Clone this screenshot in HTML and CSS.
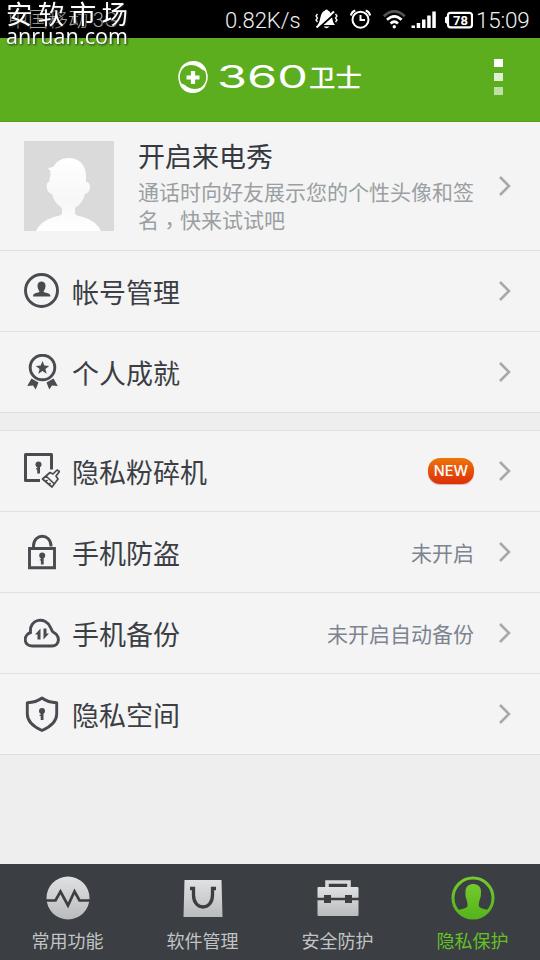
FILE: index.html
```html
<!DOCTYPE html>
<html lang="zh-CN">
<head>
<meta charset="utf-8">
<title>360卫士</title>
<link rel="stylesheet" href="styles.css">
</head>
<body>
<svg class="defs" width="0" height="0" aria-hidden="true">
  <defs>
    <linearGradient id="silver" x1="0" y1="0" x2="0" y2="1"><stop offset="0" stop-color="#e0e1e2"/><stop offset="1" stop-color="#b9bbbd"/></linearGradient>
    <linearGradient id="lime" x1="0" y1="0" x2="0" y2="1"><stop offset="0" stop-color="#74cb2d"/><stop offset="1" stop-color="#55b31c"/></linearGradient>
    <linearGradient id="face" x1="0" y1="0" x2="0" y2="1"><stop offset="0" stop-color="#fff"/><stop offset=".6" stop-color="#f7f7f7"/><stop offset="1" stop-color="#fff"/></linearGradient>
    <symbol id="chevron" viewBox="0 0 14 22"><path d="M2 2l9 9-9 9" fill="none" stroke="#a8a8a8" stroke-width="2.6"/></symbol>
    <symbol id="keyhole" viewBox="0 0 8 14"><circle cx="4" cy="3.6" r="3"/><path d="M2.700 5h2.800v7.500H2.700zM1.600 7.200h1.500v1.200H1.600z"/></symbol>
  </defs>
</svg>
<div class="app">
  <div class="status">
    <span class="carrier">中国移动 3G</span>
    <span class="speed">0.82K/s</span>
    <svg class="status-icons" width="162" height="24" viewBox="310 8 162 24">
      <path d="M316.500 25c3.500-3 2-13 7.500-14.500a1.600 1.600 0 0 1 3 0c5 2 3.500 11.500 7 14.500zM322.500 26.500h6q-3 3.500-6 0z" fill="#fff"/>
      <path d="M316 29.500L334.500 13" stroke="#000" stroke-width="2"/>
      <path d="M315.500 27.500L333 11.500" stroke="#fff" stroke-width="2"/>
      <path d="M316.500 14l-1.500 2 1.500 2-1.500 2 1.500 2M334.500 14l1.500 2-1.500 2 1.500 2-1.500 2" fill="none" stroke="#fff" stroke-width="1.300"/>
      <g fill="none" stroke="#fff" stroke-width="2"><circle cx="359.500" cy="19.700" r="8"/><path d="M359.500 15v5h4.500M349.800 15.500q1-4 4.500-5M369.200 15.500q-1-4-4.500-5"/></g>
      <g fill="none" stroke="#fff" stroke-width="2.700"><path d="M382.800 16.200q10.500-9.500 21 0" stroke="#555"/><path d="M386 19.800q7.300-7 14.600 0M389.600 23.500q3.700-3.600 7.400 0"/></g><circle cx="393.300" cy="26.700" r="1.700" fill="#fff"/>
      <path d="M410.500 25.500h3.500v2.500h-3.500zM415.700 23h3.500v5h-3.500zM421 19.500h3.500V28H421zM426.200 15.500h3.500V28h-3.500zM431.300 11.500h3.500V28h-3.500z" fill="#fff"/>
      <rect x="447" y="12.800" width="24" height="14.500" rx="2.500" fill="none" stroke="#fff" stroke-width="2.200"/><path d="M444 17.500l3-2v9l-3-2z" fill="#fff"/>
      <text x="452" y="24.500" class="battery">78</text>
    </svg>
    <span class="clock">15:09</span>
    <svg class="watermark" width="130" height="48" viewBox="0 0 130 48">
      <text class="wm-name" x="6" y="23.500" textLength="122">安软市场</text>
      <text class="wm-site" x="6" y="43.500" textLength="122">anruan.com</text>
    </svg>
  </div>
  <header class="header">
    <svg class="brand" width="190" height="38" viewBox="175 59 190 38">
      <circle cx="193" cy="77" r="14" fill="none" stroke="#fff" stroke-width="1.500"/>
      <path d="M180 69a15 15 0 0 1 21-6c3 2 5 5 5.500 8q-5-1-8-4-8-5-18.500 2zM206 85a15 15 0 0 1-21 6c-3-2-5-5-5.500-8q5 1 8 4 8 5 18.500-2z" fill="#fff"/>
      <path d="M193 71v13M186.500 77.500h13" stroke="#fff" stroke-width="4.200"/>
      <text x="217" y="88" class="brand-num" textLength="91" lengthAdjust="spacingAndGlyphs">360</text>
      <text x="309" y="87" class="brand-cn" textLength="53" lengthAdjust="spacingAndGlyphs">卫士</text>
    </svg>
    <div class="more"><i></i><i></i><i></i></div>
  </header>
  <main class="content">
    <section class="profile">
      <svg class="avatar" width="90" height="90" viewBox="0 0 90 90">
        <rect width="90" height="90" fill="#dadada"/>
        <path d="M12 90c4-9 13-13 22-15q4-1 4-3v-5q-8-5-10-14c-6-1-7-12-3-12 1-5 1-6 2-8l-2-1 2-1-3-4 5-1c4-6 9-9 16-9 11 0 17 8 17 18v6c6 0 5 11-1 12q-2 9-10 14v5q0 2 4 3c9 2 18 6 22 15z" fill="url(#face)"/>
      </svg>
      <div class="profile-text">
        <h2>开启来电秀</h2>
        <p>通话时向好友展示您的个性头像和签名<span class="comma" lang="zh-TW">，</span>快来试试吧</p>
      </div>
      <svg class="arrow"><use href="#chevron"/></svg>
    </section>
    <section class="group">
      <div class="row">
        <svg class="icon" viewBox="0 0 36 36"><circle cx="17.500" cy="17.500" r="16" fill="none" stroke="#484b50" stroke-width="2.900"/><path d="M13.500 12.500c0-5.500 8-5.500 8 0 0 3-1 4.500-2 6 .5 2 7 .5 7 5H9c0-4.500 6-3 6.500-5-1-1.500-2-3-2-6z" fill="#484b50"/></svg>
        <span class="label">帐号管理</span><svg class="arrow"><use href="#chevron"/></svg>
      </div>
      <div class="row">
        <svg class="icon" viewBox="0 0 36 36"><circle cx="18.500" cy="13.500" r="12.300" fill="none" stroke="#484b50" stroke-width="2.900"/><path d="M18.500 7l1.800 4.600 4.900.3-3.800 3.100 1.300 4.800-4.200-2.700-4.200 2.700 1.300-4.800-3.800-3.100 4.900-.3zM7.500 24.500l7 4-2.800 7-2.700-4-5.800.5zM29.500 24.500l-7 4 2.800 7 2.700-4 5.800.5z" fill="#484b50"/></svg>
        <span class="label">个人成就</span><svg class="arrow"><use href="#chevron"/></svg>
      </div>
    </section>
    <section class="group second">
      <div class="row">
        <svg class="icon" viewBox="0 0 36 36"><path d="M27.500 16.500V1.500h-26v26H16" fill="none" stroke="#484b50" stroke-width="3" stroke-linejoin="round"/><use href="#keyhole" x="10.500" y="8" width="8" height="14" fill="#484b50"/><path d="M18.500 26l7.500-6.500 3 1.500 4-4 2.500 1.500-3.500 4.500 2 3-6 8z M22 23l8.500 8M21.500 29l2-2M24.500 32l2-2" fill="none" stroke="#484b50" stroke-width="1.700" stroke-linejoin="round"/></svg>
        <span class="label">隐私粉碎机</span><span class="badge">NEW</span><svg class="arrow"><use href="#chevron"/></svg>
      </div>
      <div class="row">
        <svg class="icon" viewBox="0 0 36 36"><path d="M5.500 14.500h25v19.200h-25zM9.500 14v-2c0-13 17.500-13 17.500 0v.5" fill="none" stroke="#484b50" stroke-width="2.900"/><use href="#keyhole" x="14.200" y="18" width="8" height="14" fill="#484b50"/></svg>
        <span class="label">手机防盗</span><span class="value">未开启</span><svg class="arrow"><use href="#chevron"/></svg>
      </div>
      <div class="row">
        <svg class="icon" viewBox="0 0 36 36"><path d="M8 31C-.5 31-1 20 6.500 17.500 5 3.500 22 1 26.500 12.500c1 1 .7 3 2.500 4.500 8 4 6.500 14-1 14z" fill="none" stroke="#484b50" stroke-width="2.900"/><path d="M13.500 24.500h3v-11L11 19.500h2.500zM22.500 13.500h-3v11l5.500-6h-2.500z" fill="#484b50"/></svg>
        <span class="label">手机备份</span><span class="value">未开启自动备份</span><svg class="arrow"><use href="#chevron"/></svg>
      </div>
      <div class="row">
        <svg class="icon" viewBox="0 0 36 36"><path d="M18 2q-6 4.500-14.700 4.700V18q0 10 14.700 16.500Q32.700 28 32.700 18V6.700Q24 6.500 18 2z" fill="none" stroke="#484b50" stroke-width="2.900" stroke-linejoin="round"/><use href="#keyhole" x="14" y="11.500" width="8" height="14" fill="#484b50"/></svg>
        <span class="label">隐私空间</span><svg class="arrow"><use href="#chevron"/></svg>
      </div>
    </section>
  </main>
  <nav class="tabs">
    <div class="tab"><svg viewBox="0 0 44 44"><circle cx="22" cy="22" r="21.500" fill="url(#silver)"/><path d="M0 24.500h9.500l5-9 7.500 14 6.500-14 5 9H44" fill="none" stroke="#3b3e42" stroke-width="2.700"/></svg><span>常用功能</span></div>
    <div class="tab"><svg viewBox="0 0 44 44"><path d="M3.500 4h37l1 37h-39z" fill="url(#silver)"/><path d="M9 12.500h3.500V19c0 16 19 16 19 0v-6.500H35" fill="none" stroke="#3b3e42" stroke-width="3.300"/></svg><span>软件管理</span></div>
    <div class="tab"><svg viewBox="0 0 44 44"><path d="M11 11V6h22v5" fill="none" stroke="#d8d9da" stroke-width="3.600"/><rect x="1.500" y="11" width="41" height="29" rx="1" fill="url(#silver)"/><path d="M1 23h42" stroke="#3b3e42" stroke-width="2.400"/><path d="M8 19h7v8H8zM29 19h7v8h-7z" fill="#3b3e42"/></svg><span>安全防护</span></div>
    <div class="tab active"><svg viewBox="0 0 44 44"><circle cx="22" cy="22" r="20" fill="none" stroke="url(#lime)" stroke-width="3"/><path d="M14.500 15C14.500 5.500 30 5.500 30 15c0 3 0 5-.7 7-1 3-1.500 4-1.500 8 2 4 8 2 10 5.500Q32 42 22 42.500 12 42 6.500 35.500c2-3.500 8-1.500 10-5.500 0-4-.5-5-1.500-8-.7-2-.5-4-.5-7z" fill="url(#lime)"/></svg><span>隐私保护</span></div>
  </nav>
</div>
</body>
</html>
```
FILE: styles.css
```css
* { box-sizing: border-box; margin: 0; padding: 0; }
body { font-family: Roboto, "Noto Sans CJK SC", sans-serif; background: #eeeeee; }
.defs { display: block; height: 0; }
.app { width: 540px; height: 960px; display: flex; flex-direction: column; background: #eeeeee; overflow: hidden; }

.status { position: relative; height: 38px; flex: none; background: #000; color: #f2f2f2; display: flex; align-items: center; padding: 2px 9px 0 8px; }
.carrier { font-size: 20px; line-height: 24px; color: #a5a5a5; font-weight: 300; white-space: nowrap; }
.speed { margin-left: auto; font-size: 22px; font-weight: 300; width: 78px; white-space: nowrap; }
.status-icons { margin: 0 3px 0 8px; }
.battery { font: bold 13px Roboto, sans-serif; fill: #fff; }
.clock { font-size: 22.500px; font-weight: 300; width: 55px; white-space: nowrap; letter-spacing: -.2px; }
.watermark { position: absolute; left: 0; top: 0; z-index: 2; filter: drop-shadow(1px 1px 1px #222); }
.wm-name { font-family: "Noto Sans CJK SC", sans-serif; font-size: 26.500px; fill: #fff; }
.wm-site { font-family: "Open Sans", sans-serif; font-size: 21.500px; fill: #fff; }

.header { position: relative; height: 84px; flex: none; background: #5dae1f; border-bottom: 1px solid #509f17; display: flex; align-items: center; justify-content: center; padding-bottom: 3px; }
.brand-num { font-family: Inter, sans-serif; font-size: 31px; font-weight: 400; fill: #fff; }
.brand-cn { font-family: "Noto Sans CJK SC", sans-serif; font-size: 25px; font-weight: 500; fill: #fff; }
.more { position: absolute; right: 37px; top: 21px; display: flex; flex-direction: column; gap: 6px; }
.more i { width: 9px; height: 8px; background: #fff; }
.more i:nth-child(2) { opacity: .8; }
.more i:nth-child(3) { opacity: .6; }

.content { flex: 1; }
.profile { height: 129px; background: #f4f4f4; border-bottom: 1px solid #dfdfdf; display: flex; align-items: center; padding: 0 28px 0 24px; }
.avatar { flex: none; }
.profile-text { margin-left: 24px; width: 340px; flex: none; padding-top: 2px; }
h2 { font-size: 27px; line-height: 37px; font-weight: 400; color: #36393f; }
p { font-size: 21px; line-height: 28px; color: #9a9fa3; padding-top: 2px; }
.comma { font-family: "Noto Sans CJK TC", sans-serif; line-height: 1; vertical-align: -5px; }
.arrow { width: 14px; height: 22px; margin-left: auto; flex: none; }

.group { background: #f4f4f4; }
.second { margin-top: 17px; border-top: 1px solid #e0e0e0; }
.row { height: 81px; border-bottom: 1px solid #e0e0e0; display: flex; align-items: center; padding: 0 28px 0 24px; }
.icon { width: 36px; height: 36px; flex: none; }
.label { margin-left: 12px; font-size: 27px; line-height: 40px; color: #3b3e44; padding-top: 5px; }
.value { margin-left: auto; font-size: 21px; line-height: 30px; color: #7d8390; padding-top: 4px; }
.value + .arrow, .badge + .arrow { margin-left: 24px; }
.badge { margin-left: auto; width: 46px; height: 26px; border-radius: 12px; background: linear-gradient(#ee7409, #dc2f08); color: #fff; font: 500 14.500px/26px Inter, sans-serif; text-align: center; box-shadow: 0 1px 1px #d6b4aa; }

.tabs { height: 96px; flex: none; display: flex; background: #3b3e42; }
.tab { width: 135px; display: flex; flex-direction: column; align-items: center; padding-top: 12px; color: #c2c4c6; }
.tab svg { width: 44px; height: 44px; }
.tab span { font-size: 18px; line-height: 26px; margin-top: 9px; }
.active { color: #64c227; }
```
